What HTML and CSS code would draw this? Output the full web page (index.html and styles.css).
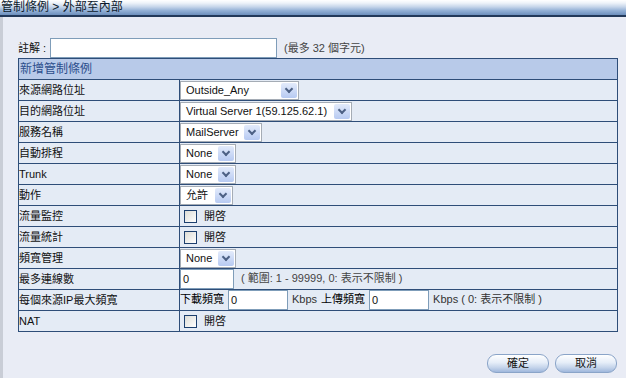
FILE: index.html
```html
<!DOCTYPE html>
<html>
<head>
<meta charset="utf-8">
<link rel="stylesheet" href="styles.css">
</head>
<body>
<div class="titlebar">管制條例 &gt; 外部至內部</div>
<div class="page">
  <div class="note">
    <span class="lbl">註解 :</span>
    <span class="txt wide"></span>
    <span class="hint">(最多 32 個字元)</span>
  </div>
  <table class="grid">
    <tr class="head"><td colspan="2">新增管制條例</td></tr>
    <tr><td class="k">來源網路位址</td><td class="v"><span class="sel w118">Outside_Any<i class="arr"></i></span></td></tr>
    <tr><td class="k">目的網路位址</td><td class="v"><span class="sel w172">Virtual Server 1(59.125.62.1)<i class="arr"></i></span></td></tr>
    <tr><td class="k">服務名稱</td><td class="v"><span class="sel w82">MailServer<i class="arr"></i></span></td></tr>
    <tr><td class="k">自動排程</td><td class="v"><span class="sel w56">None<i class="arr"></i></span></td></tr>
    <tr><td class="k">Trunk</td><td class="v"><span class="sel w56">None<i class="arr"></i></span></td></tr>
    <tr><td class="k">動作</td><td class="v"><span class="sel w53">允許<i class="arr"></i></span></td></tr>
    <tr><td class="k">流量監控</td><td class="v"><span class="cb"></span>開啓</td></tr>
    <tr><td class="k">流量統計</td><td class="v"><span class="cb"></span>開啓</td></tr>
    <tr><td class="k">頻寬管理</td><td class="v"><span class="sel w56">None<i class="arr"></i></span></td></tr>
    <tr><td class="k">最多連線數</td><td class="v"><span class="txt w54">0</span><span class="gray">( 範圍: 1 - 99999, 0: 表示不限制 )</span></td></tr>
    <tr><td class="k">每個來源IP最大頻寬</td><td class="v"><span class="bw">下載頻寬</span><span class="txt w60">0</span><span class="gray2">Kbps</span><span class="bw">上傳頻寬</span><span class="txt w60">0</span><span class="gray2">Kbps ( 0: 表示不限制 )</span></td></tr>
    <tr><td class="k">NAT</td><td class="v"><span class="cb"></span>開啓</td></tr>
  </table>
  <div class="actions">
    <span class="btn">確定</span>
    <span class="btn">取消</span>
  </div>
</div>
</body>
</html>
```

FILE: styles.css
```css
html, body {
  margin: 0;
  padding: 0;
}
body {
  width: 626px;
  height: 378px;
  overflow: hidden;
  background: #e9ecf5;
  font-family: "Liberation Sans", "Noto Sans CJK TC", sans-serif;
  font-size: 11px;
  line-height: 14px;
  color: #111;
}
.titlebar {
  height: 15px;
  line-height: 15px;
  padding-left: 1px;
  font-size: 12px;
  color: #0c1a2c;
  background: linear-gradient(#ffffff 0%, #eef3f9 20%, #c7d6ea 45%, #94b1d6 70%, #6c8fbd 100%);
  border-bottom: 2px solid #22395a;
  overflow: hidden;
}
.page {
  border-left: 3px solid #c9cdd6;
  height: 361px;
  padding-left: 15px;
  box-sizing: border-box;
}
.note {
  display: flex;
  align-items: center;
  height: 20px;
  padding-top: 21px;
}
.lbl {
  width: 32px;
}
.txt {
  display: inline-block;
  box-sizing: border-box;
  height: 20px;
  background: #fff;
  border: 1px solid #7f9db9;
  padding-left: 2px;
  line-height: 18px;
  vertical-align: middle;
}
.wide { width: 227px; }
.w54 { width: 54px; }
.w60 { width: 60px; }
.hint {
  margin-left: 7px;
  color: #444;
}
.grid {
  border-collapse: collapse;
  width: 600px;
}
.grid td {
  border: 1px solid #2e4d78;
  height: 20px;
  padding: 0;
  background: #e4ebf5;
  white-space: nowrap;
  line-height: 14px;
  vertical-align: middle;
}
.grid tr.head td {
  background: #b8cae9;
  color: #2c4e8c;
  font-size: 12px;
  padding-left: 1px;
}
.grid td.k {
  width: 160px;
}
.sel {
  display: inline-flex;
  align-items: center;
  justify-content: space-between;
  box-sizing: border-box;
  height: 19px;
  background: #fff;
  border: 1px solid #a5acb5;
  padding-left: 5px;
  padding-right: 1px;
  vertical-align: middle;
}
.w118 { width: 119px; }
.w172 { width: 172px; }
.w82 { width: 82px; }
.w56 { width: 56px; }
.w53 { width: 53px; }
.arr {
  display: inline-block;
  width: 16px;
  height: 15px;
  border-radius: 2px;
  background: linear-gradient(#e3ebfb, #b7caf2);
  position: relative;
}
.arr::after {
  content: "";
  position: absolute;
  left: 5px;
  top: 3px;
  width: 4px;
  height: 4px;
  border-right: 2px solid #4d6185;
  border-bottom: 2px solid #4d6185;
  transform: rotate(45deg);
}
.cb {
  display: inline-block;
  width: 11px;
  height: 11px;
  border: 1px solid #1c3f6e;
  background: linear-gradient(135deg, #dcdcd6, #ffffff);
  margin: 0 7px 0 4px;
  vertical-align: middle;
}
.gray {
  color: #444;
  margin-left: 7px;
}
.gray2 {
  color: #333;
  margin-left: 4px;
}
.bw {
  margin-right: 4px;
  color: #000;
}
.gray2 + .bw {
  margin-left: 4px;
}
.actions {
  display: flex;
  justify-content: flex-end;
  gap: 6px;
  width: 599px;
  margin-top: 22px;
}
.btn {
  width: 60px;
  height: 17px;
  line-height: 17px;
  text-align: center;
  border-radius: 9px;
  border: 1px solid #8aa4c8;
  background: linear-gradient(#ffffff 0%, #e5edf8 45%, #c3d3ea 75%, #9fb7dc 100%);
  color: #111;
}
```
